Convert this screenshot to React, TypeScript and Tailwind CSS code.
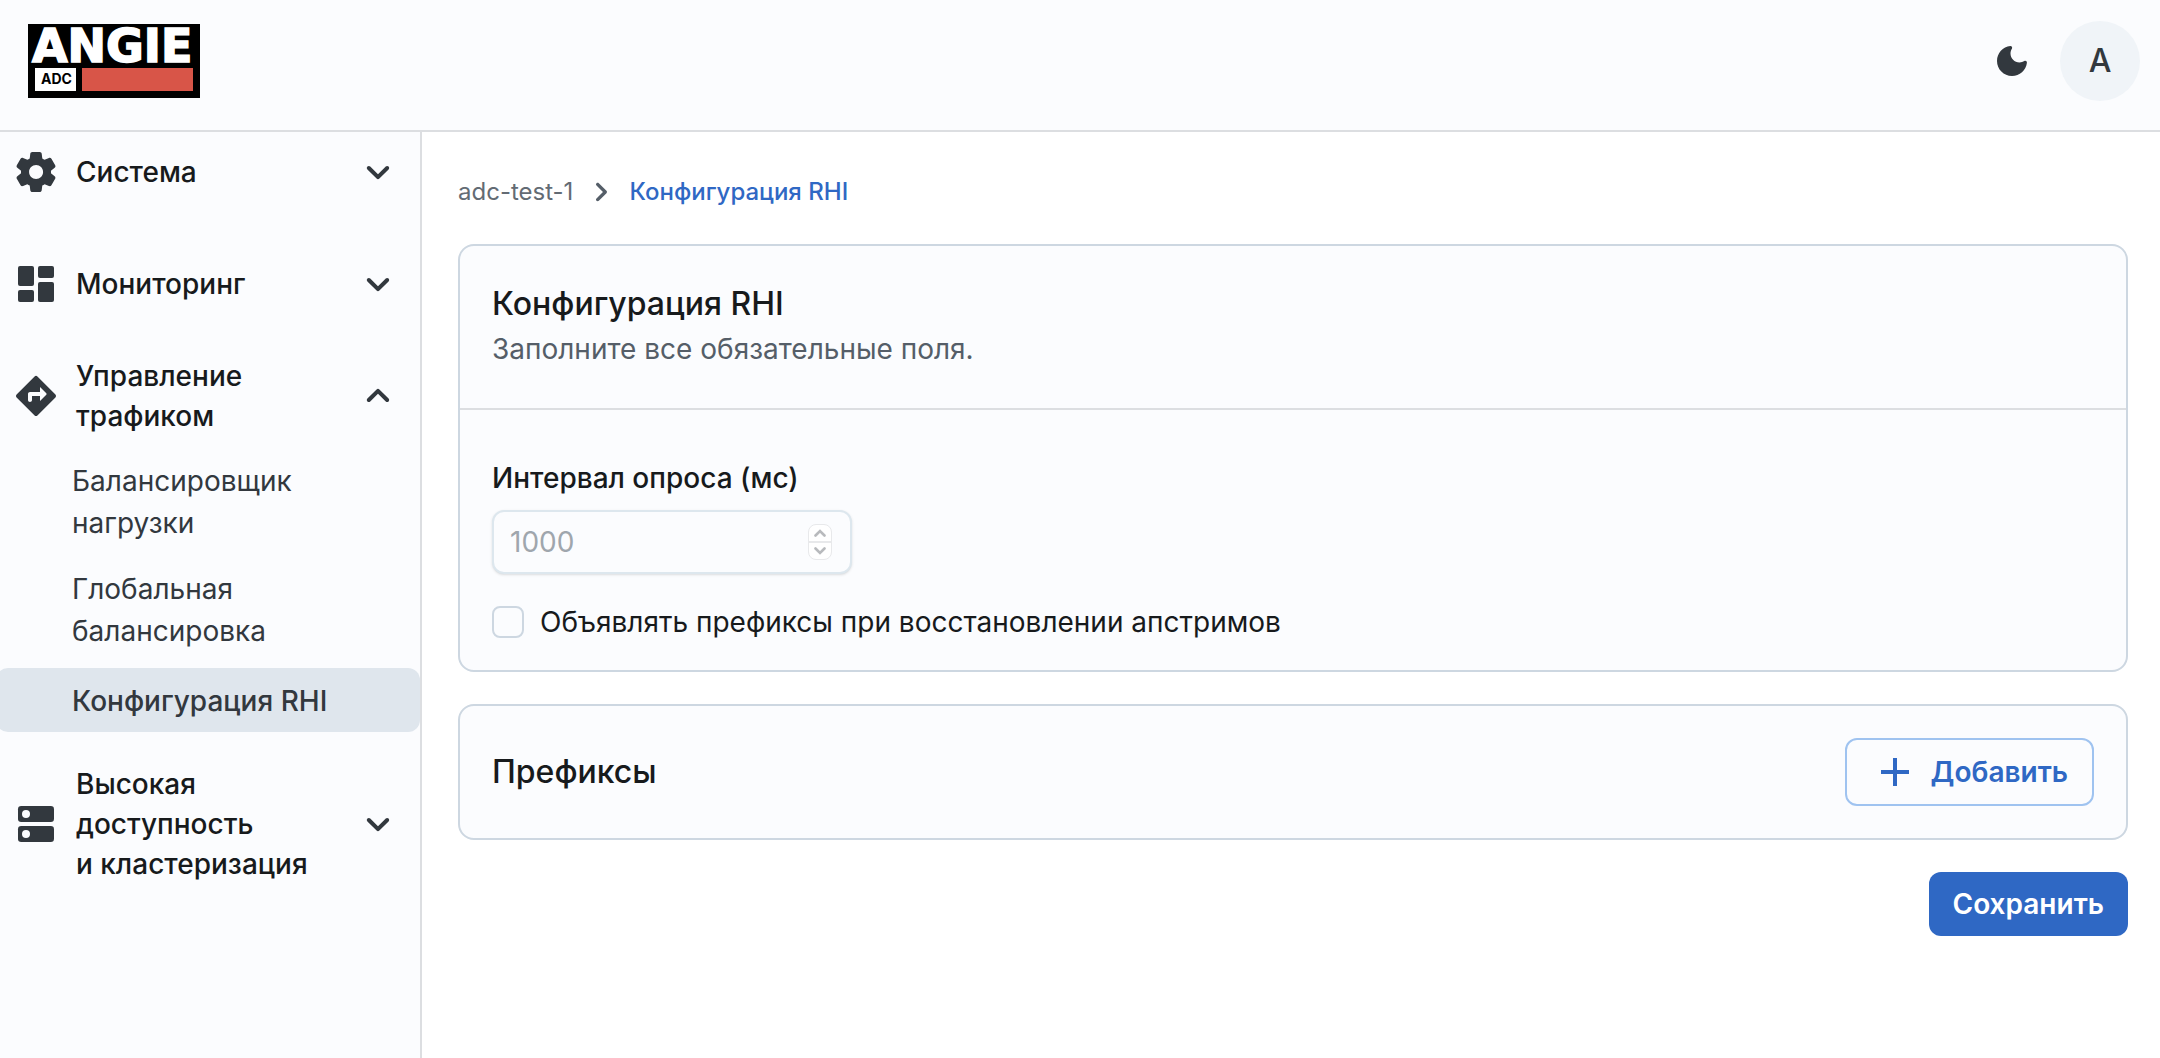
import React, { useState } from 'react';
import { MdAdd } from 'react-icons/md';

const SettingsIcon = () => (
  <svg viewBox="0 0 24 24" className="w-12 h-12 shrink-0" fill="currentColor" aria-hidden="true">
    <path d="M19.5 12c0-.23-.01-.45-.03-.68l1.86-1.41c.4-.3.51-.86.26-1.3l-1.87-3.23c-.25-.44-.79-.62-1.25-.42l-2.15.91c-.37-.26-.76-.49-1.17-.68l-.29-2.31c-.06-.5-.49-.88-.99-.88h-3.73c-.51 0-.94.38-1 .88l-.29 2.31c-.41.19-.8.42-1.17.68l-2.15-.91c-.46-.2-1-.02-1.25.42L2.41 8.62c-.25.44-.14.99.26 1.3l1.86 1.41c-.02.22-.03.44-.03.67s.01.45.03.68l-1.86 1.41c-.4.3-.51.86-.26 1.3l1.87 3.23c.25.44.79.62 1.25.42l2.15-.91c.37.26.76.49 1.17.68l.29 2.31c.06.5.49.88.99.88h3.73c.5 0 .93-.38.99-.88l.29-2.31c.41-.19.8-.42 1.17-.68l2.15.91c.46.2 1 .02 1.25-.42l1.87-3.23c.25-.44.14-.99-.26-1.3l-1.86-1.41c.03-.23.04-.45.04-.68zm-7.46 3.5c-1.93 0-3.5-1.57-3.5-3.5s1.57-3.5 3.5-3.5 3.5 1.57 3.5 3.5-1.57 3.5-3.5 3.5z" />
  </svg>
);

const DashboardIcon = () => (
  <svg viewBox="0 0 24 24" className="w-12 h-12 shrink-0" fill="currentColor" aria-hidden="true">
    <rect x="3" y="3" width="8" height="10" rx="1" />
    <rect x="13" y="3" width="8" height="6" rx="1" />
    <rect x="3" y="15" width="8" height="6" rx="1" />
    <rect x="13" y="11" width="8" height="10" rx="1" />
  </svg>
);

const DirectionsIcon = () => (
  <svg viewBox="0 0 24 24" className="w-12 h-12 shrink-0" fill="currentColor" aria-hidden="true">
    <path d="m21.71 11.29-9-9a.9959.9959 0 0 0-1.41 0l-9 9c-.39.39-.39 1.02 0 1.41l9 9c.39.39 1.02.39 1.41 0l9-9c.39-.38.39-1.01 0-1.41M14 14.5V12h-4v2c0 .55-.45 1-1 1s-1-.45-1-1v-3c0-.55.45-1 1-1h5V7.5l3.15 3.15c.2.2.2.51 0 .71z" />
  </svg>
);

const ServersIcon = () => (
  <svg viewBox="0 0 24 24" className="w-12 h-12 shrink-0" aria-hidden="true">
    <rect x="3" y="3" width="18" height="8" rx="1.6" fill="currentColor" />
    <rect x="3" y="13" width="18" height="8" rx="1.6" fill="currentColor" />
    <circle cx="7" cy="7" r="2" fill="#fbfcfe" />
    <circle cx="7" cy="17" r="2" fill="#fbfcfe" />
  </svg>
);

const chevrons = {
  down: 'M8.12 9.29 12 13.17l3.88-3.88c.39-.39 1.02-.39 1.41 0s.39 1.02 0 1.41l-4.59 4.59c-.39.39-1.02.39-1.41 0L6.7 10.7a.9959.9959 0 0 1 0-1.41c.39-.38 1.03-.39 1.42 0',
  up: 'M8.12 14.71 12 10.83l3.88 3.88c.39.39 1.02.39 1.41 0s.39-1.02 0-1.41L12.7 8.71a.9959.9959 0 0 0-1.41 0L6.7 13.3c-.39.39-.39 1.02 0 1.41s1.03.39 1.42 0',
  right: 'M9.29 15.88 13.17 12 9.29 8.12a.9959.9959 0 0 1 0-1.41c.39-.39 1.02-.39 1.41 0l4.59 4.59c.39.39.39 1.02 0 1.41L10.7 17.3c-.39.39-1.02.39-1.41 0-.38-.39-.39-1.03 0-1.42',
};

const Chevron: React.FC<{ dir: keyof typeof chevrons; className: string }> = ({ dir, className }) => (
  <svg viewBox="0 0 24 24" className={className} fill="currentColor" aria-hidden="true">
    <path d={chevrons[dir]} />
  </svg>
);

const Logo = () => (
  <svg viewBox="0 0 172 74" className="w-[172px] h-[74px] overflow-visible" role="img" aria-label="Angie ADC">
    <rect width="172" height="74" fill="#000" />
    <text x="4" y="38" fontFamily="DejaVu Sans, sans-serif" fontWeight="700" fontSize="46" fill="#fff" stroke="#fff" strokeWidth="1.6">ANGIE</text>
    <rect x="7" y="44" width="41" height="23" fill="#fff" />
    <text x="13" y="60" fontFamily="Inter, sans-serif" fontWeight="700" fontSize="14" fill="#000">ADC</text>
    <rect x="54" y="44" width="111" height="23" fill="#d85548" />
  </svg>
);

interface SectionProps {
  icon: React.ReactNode;
  title: string;
  open?: boolean;
  onToggle: () => void;
}

const Section: React.FC<SectionProps> = ({ icon, title, open, onToggle }) => (
  <button
    type="button"
    onClick={onToggle}
    aria-expanded={!!open}
    className="w-full flex items-center pl-3 pr-[18px] py-3 min-h-16 text-left text-[#32383e]"
  >
    <span className="h-10 flex items-center">{icon}</span>
    <span className="flex-1 px-4 text-[28px] leading-10 font-medium text-[#171a1c] whitespace-pre-line">{title}</span>
    <span className="h-10 flex items-center">
      <Chevron dir={open ? 'up' : 'down'} className="w-12 h-12 shrink-0" />
    </span>
  </button>
);

const trafficLinks = [
  { label: 'Балансировщик\nнагрузки', active: false },
  { label: 'Глобальная\nбалансировка', active: false },
  { label: 'Конфигурация RHI', active: true },
];

export default function App() {
  const [open, setOpen] = useState<Record<string, boolean>>({ traffic: true });
  const [interval, setIntervalValue] = useState('');
  const [announce, setAnnounce] = useState(false);

  const toggle = (key: string) => setOpen(prev => ({ ...prev, [key]: !prev[key] }));

  const step = (delta: number) =>
    setIntervalValue(prev => String(Math.max(0, (Number(prev) || 1000) + delta)));

  return (
    <div className="min-h-screen flex flex-col bg-white font-[Inter,sans-serif] text-[#171a1c]">
      {/* Header */}
      <header className="h-33 shrink-0 flex items-center justify-between pl-7 pr-5 pb-2 bg-[#fbfcfe] border-b-2 border-[#dcdee1]">
        <a href="#home"><Logo /></a>
        <div className="flex items-center gap-7">
          <button type="button" aria-label="Тёмная тема" className="w-10 h-10 flex items-center justify-center text-[#32383e]">
            <svg viewBox="0 0 24 24" className="w-10 h-10" fill="currentColor" aria-hidden="true">
              <path d="M11.01 3.05C6.51 3.54 3 7.36 3 12c0 4.97 4.03 9 9 9 4.63 0 8.45-3.5 8.95-8 .09-.79-.78-1.42-1.54-.95-.84.54-1.84.85-2.91.85-2.98 0-5.4-2.42-5.4-5.4 0-1.06.31-2.06.84-2.89.45-.67-.04-1.63-.93-1.56z" />
            </svg>
          </button>
          <button type="button" className="w-20 h-20 rounded-full bg-[#f0f4f8] text-[32px] font-medium text-[#32383e]">A</button>
        </div>
      </header>

      <div className="flex flex-1">
        {/* Sidebar */}
        <nav className="w-[422px] shrink-0 bg-[#fbfcfe] border-r-2 border-[#dcdee1] pt-2">
          <Section icon={<SettingsIcon />} title="Система" open={open.system} onToggle={() => toggle('system')} />
          <div className="pt-12">
            <Section icon={<DashboardIcon />} title="Мониторинг" open={open.monitoring} onToggle={() => toggle('monitoring')} />
          </div>
          <div className="pt-7">
            <Section icon={<DirectionsIcon />} title={'Управление\nтрафиком'} open={open.traffic} onToggle={() => toggle('traffic')} />
          </div>
          {open.traffic && (
            <ul>
              {trafficLinks.map(link => (
                <li key={link.label}>
                  <a
                    href="#rhi"
                    aria-current={link.active ? 'page' : undefined}
                    className={`block text-[28px] leading-[42px] whitespace-pre-line text-[#32383e] ${
                      link.active ? 'mt-1 -ml-1 pl-[76px] pt-3 pb-[10px] rounded-xl bg-[#dfe6ed] font-medium' : 'pl-[72px] py-3'
                    }`}
                  >
                    {link.label}
                  </a>
                </li>
              ))}
            </ul>
          )}
          <div className="pt-5">
            <Section icon={<ServersIcon />} title={'Высокая\nдоступность\nи\u00a0кластеризация'} open={open.cluster} onToggle={() => toggle('cluster')} />
          </div>
        </nav>

        {/* Content */}
        <main className="flex-1 min-w-0 pl-9 pr-8 pt-10">
          <div className="flex items-center gap-2 text-2xl leading-10">
            <a href="#adc" className="text-[#636b74]">adc-test-1</a>
            <Chevron dir="right" className="w-10 h-10 text-[#555e68]" />
            <span className="font-medium text-[#2f68c4]">Конфигурация RHI</span>
          </div>

          <form onSubmit={e => e.preventDefault()}>
            <section className="mt-8 rounded-2xl border-2 border-[#cdd7e1] bg-[#fbfcfe]">
              <div className="px-8 pt-[34px] pb-[38px] border-b-2 border-[#dcdee1]">
                <h1 className="text-[32px] leading-12 font-medium">Конфигурация RHI</h1>
                <p className="text-[28px] leading-[42px] text-[#555e68]">Заполните все обязательные поля.</p>
              </div>
              <div className="px-8 pt-12 pb-7">
                <label htmlFor="interval" className="block text-[28px] leading-10 font-medium">Интервал опроса (мс)</label>
                <div className="mt-3 w-[360px] h-16 flex items-center pl-4 pr-[18px] rounded-xl border-2 border-[#dde7ee] bg-[#fbfcfe] shadow-sm">
                  <input
                    id="interval"
                    inputMode="numeric"
                    placeholder="1000"
                    value={interval}
                    onChange={e => setIntervalValue(e.target.value)}
                    className="flex-1 min-w-0 bg-transparent outline-none text-[28px] placeholder:text-[#9fa6ad]"
                  />
                  <div className="w-6 h-9 flex flex-col rounded-lg border border-[#e8e9eb] bg-white text-[#b8babd]">
                    <button type="button" aria-label="Увеличить" onClick={() => step(1)} className="flex-1 flex items-center justify-center border-b-2 border-[#e8e9eb]">
                      <svg viewBox="0 0 12 8" className="w-3 h-2" fill="none" stroke="currentColor" strokeWidth="2.6" strokeLinecap="round"><path d="M1.5 6.5 6 2l4.5 4.5" /></svg>
                    </button>
                    <button type="button" aria-label="Уменьшить" onClick={() => step(-1)} className="flex-1 flex items-center justify-center">
                      <svg viewBox="0 0 12 8" className="w-3 h-2" fill="none" stroke="currentColor" strokeWidth="2.6" strokeLinecap="round"><path d="M1.5 1.5 6 6l4.5-4.5" /></svg>
                    </button>
                  </div>
                </div>
                <label className="mt-7 flex items-center gap-4 text-[28px] leading-10">
                  <input
                    type="checkbox"
                    checked={announce}
                    onChange={e => setAnnounce(e.target.checked)}
                    className="appearance-none w-8 h-8 rounded-lg border-2 border-[#cdd7e1] bg-[#fbfcfe] checked:bg-[#2f68c4]"
                  />
                  Объявлять префиксы при восстановлении апстримов
                </label>
              </div>
            </section>

            <section className="mt-8 flex items-center justify-between p-8 rounded-2xl border-2 border-[#cdd7e1] bg-[#fbfcfe]">
              <h2 className="text-[32px] leading-12 font-medium">Префиксы</h2>
              <button type="button" className="h-17 flex items-center gap-3 px-6 rounded-xl border-2 border-[#9fc3f0] text-[28px] font-semibold text-[#2f68c4]">
                <MdAdd className="w-12 h-12" />
                Добавить
              </button>
            </section>

            <div className="mt-8 flex justify-end">
              <button type="submit" className="h-16 px-6 rounded-xl bg-[#2f68c4] text-[28px] font-semibold text-white">Сохранить</button>
            </div>
          </form>
        </main>
      </div>
    </div>
  );
}
